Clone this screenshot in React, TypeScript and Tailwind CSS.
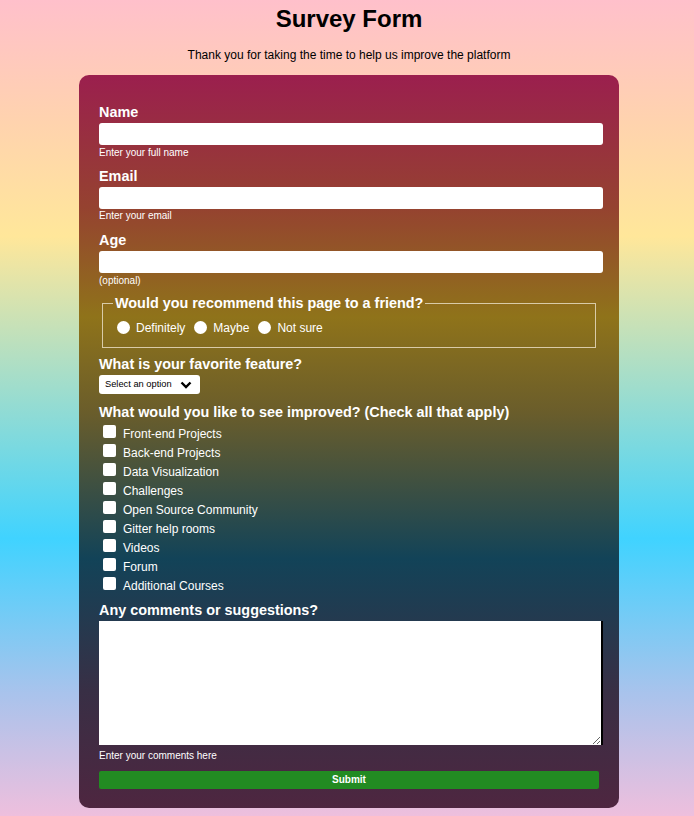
import React from "react";

const items = [
  "Front-end Projects",
  "Back-end Projects",
  "Data Visualization",
  "Challenges",
  "Open Source Community",
  "Gitter help rooms",
  "Videos",
  "Forum",
  "Additional Courses",
];

export default function App() {
  return (
    <div
      className="min-h-[816px] w-full bg-[linear-gradient(180deg,#ffc0cb_0%,#ffd3ae_15%,#ffe79a_29%,#40d3ff_66%,#a9c3ec_85%,#eebfdd_100%)] pl-[4px] pb-[8px] text-black"
      style={{ fontFamily: '"Liberation Sans", Arial, sans-serif' }}
    >
      <div className="flex flex-col items-center">
        <h1 className="mt-[5px] text-[24px] font-bold leading-[28px]">Survey Form</h1>
        <p className="mt-[15px] text-[12px] leading-[14px]">
          Thank you for taking the time to help us improve the platform
        </p>

        <form className="mt-[13px] w-[540px] rounded-[10px] bg-[linear-gradient(180deg,#9b1f4e_0%,#954230_18%,#8f731a_33%,#6a5d2b_46%,#124358_66%,#382f45_84%,#4e2640_100%)] px-[20px] pt-[29px] pb-[19px] text-white">
          <label className="block text-[14.4px] font-bold leading-[16px]">Name</label>
          <input className="mt-[3px] block h-[22px] w-[504px] rounded-[3px] bg-white" />
          <div className="mt-[2px] text-[10px] leading-[12px]">Enter your full name</div>

          <label className="mt-[9px] block text-[14.4px] font-bold leading-[16px]">Email</label>
          <input className="mt-[3px] block h-[22px] w-[504px] rounded-[3px] bg-white" />
          <div className="mt-[1px] text-[10px] leading-[12px]">Enter your email</div>

          <label className="mt-[10px] block text-[14.4px] font-bold leading-[16px]">Age</label>
          <input className="mt-[3px] block h-[22px] w-[504px] rounded-[3px] bg-white" />
          <div className="mt-[2px] text-[10px] leading-[12px]">(optional)</div>

          <fieldset className="mx-[3px] mt-[8px] border border-[#d9cba8] px-[10px] pb-[12px] pt-[10px] text-[12px]">
            <legend className="px-[2px] text-[14.4px] font-bold leading-[16px]">
              Would you recommend this page to a friend?
            </legend>
            <div className="flex items-center leading-[14px]">
              <input type="radio" name="rec" className="ml-[4px] h-[13px] w-[13px] -translate-y-[1px] appearance-none rounded-full bg-white" />
              <span className="ml-[6px]">Definitely</span>
              <input type="radio" name="rec" className="ml-[9px] h-[13px] w-[13px] -translate-y-[1px] appearance-none rounded-full bg-white" />
              <span className="ml-[6px]">Maybe</span>
              <input type="radio" name="rec" className="ml-[9px] h-[13px] w-[13px] -translate-y-[1px] appearance-none rounded-full bg-white" />
              <span className="ml-[6px]">Not sure</span>
            </div>
          </fieldset>

          <div className="mt-[8px] text-[14.4px] font-bold leading-[16px]">What is your favorite feature?</div>
          <div className="mt-[3px] flex h-[19px] w-[101px] items-center rounded-[3px] bg-white pl-[6px] text-[9.3px] text-black">
            <span>Select an option</span>
            <svg className="ml-[8px]" width="12" height="8" viewBox="0 0 12 8">
              <path d="M1.5 1.5 L6 6 L10.5 1.5" fill="none" stroke="#000" strokeWidth="2.4" />
            </svg>
          </div>

          <div className="mt-[10px] text-[14.4px] font-bold leading-[16px]">
            What would you like to see improved? (Check all that apply)
          </div>
          <div className="mt-[4px] flex flex-col">
            {items.map((it) => (
              <label key={it} className="flex h-[19px] items-center text-[12px] leading-[14px]">
                <input type="checkbox" className="ml-[4px] h-[13px] w-[13px] -translate-y-[2px] appearance-none rounded-[2px] bg-white" />
                <span className="ml-[7px]">{it}</span>
              </label>
            ))}
          </div>

          <div className="mt-[7px] text-[14.4px] font-bold leading-[16px]">Any comments or suggestions?</div>
          <textarea className="mt-[3px] block h-[124px] w-[504px] border-r-2 border-black bg-white" />
          <div className="mt-[5px] text-[10px] leading-[12px]">Enter your comments here</div>

          <button
            type="button"
            className="mt-[9px] block h-[18px] w-[500px] rounded-[2px] bg-[#228b22] text-[10px] font-bold leading-[18px] text-white"
          >
            Submit
          </button>
        </form>
      </div>
    </div>
  );
}
